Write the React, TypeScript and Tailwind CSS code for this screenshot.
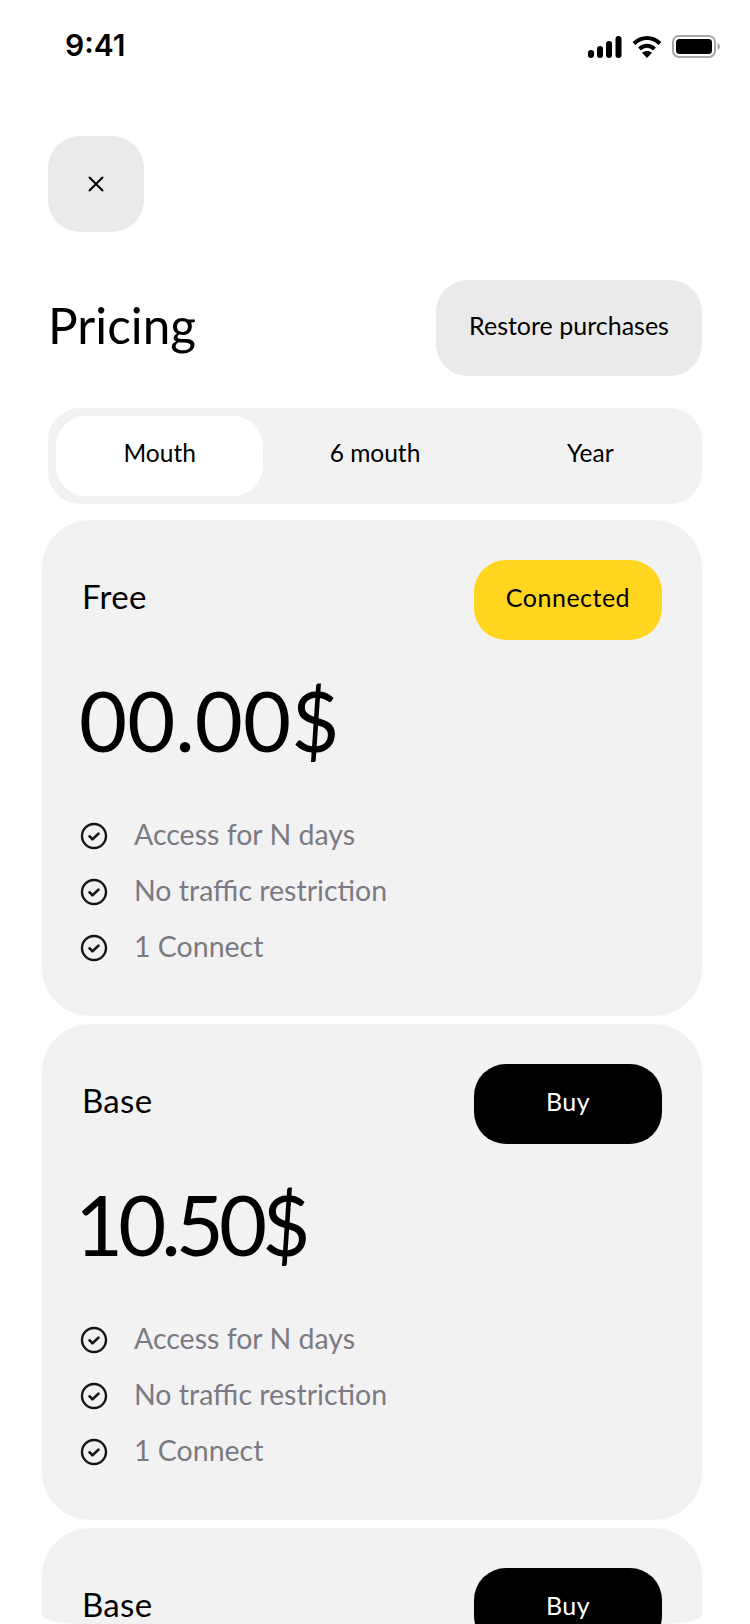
const features = ["Access for N days", "No traffic restriction", "1 Connect"];

function CheckIcon() {
  return (
    <svg width="28" height="28" viewBox="0 0 28 28" fill="none" stroke="#14141a" strokeWidth="2.400" className="shrink-0">
      <circle cx="14" cy="14" r="12" />
      <path d="M9.500 14.300l3 2.900 6-5.600" strokeLinecap="round" strokeLinejoin="round" strokeWidth="2.600" />
    </svg>
  );
}

function StatusBar() {
  return (
    <div className="h-[88px] flex items-start justify-between pl-[65px] pr-[30px] pt-[28px]">
      <span className="font-['Inter',sans-serif] font-semibold text-[30px] leading-[34px] text-black">9:41</span>
      <div className="flex items-center gap-[10px] pt-[7px]">
        <svg width="34" height="22" viewBox="0 0 34 22" fill="#000">
          <rect x="0" y="14" width="6" height="8" rx="3" />
          <rect x="9" y="10" width="6" height="12" rx="3" />
          <rect x="18" y="5" width="6" height="17" rx="3" />
          <rect x="27.500" y="0" width="6" height="22" rx="3" />
        </svg>
        <svg width="30" height="23" viewBox="0 0 30 23" fill="none" stroke="#000" strokeWidth="4">
          <path d="M2 8.500C9.500 1 20.500 1 28 8.500" />
          <path d="M7.500 14c4.500-4.200 10.500-4.200 15 0" />
          <path d="M15 23l-5-5.200c2.800-2.400 7.200-2.400 10 0z" fill="#000" stroke="none" />
        </svg>
        <svg width="48" height="23" viewBox="0 0 48 23" fill="none">
          <rect x="1" y="1" width="42" height="21" rx="6" stroke="#a8a8a8" strokeWidth="2" />
          <rect x="4" y="4" width="36" height="15" rx="3.500" fill="#000" />
          <path d="M45.500 8v7c1.500-.6 2.500-2 2.500-3.500s-1-2.900-2.500-3.500z" fill="#a8a8a8" />
        </svg>
      </div>
    </div>
  );
}

function CardHeader({ name, action, connected }: { name: string; action: string; connected?: boolean }) {
  return (
    <div className="flex items-center justify-between pl-[40px]">
      <span className="text-[33px] tracking-[0.3px] text-black pb-[7px]">{name}</span>
      <button className={`w-[188px] h-[80px] rounded-[32px] text-[25px] tracking-[0.5px] pb-[4px] shrink-0 ${connected ? "bg-[#ffd520] text-black" : "bg-black text-white"}`}>
        {action}
      </button>
    </div>
  );
}

function PlanCard({ name, price, action, connected, priceClass }: { name: string; price: string; action: string; connected?: boolean; priceClass?: string }) {
  return (
    <div className="h-[496px] rounded-[48px] bg-[#f2f2f2] pt-[40px] pr-[40px]">
      <CardHeader name={name} action={action} connected={connected} />
      <div className={`pl-[37px] mt-[32px] text-[83px] leading-[96px] text-black ${priceClass ?? ""}`}>{price}</div>
      <ul className="pl-[38px] mt-[50px] flex flex-col gap-[20px]">
        {features.map((f) => (
          <li key={f} className="flex items-center gap-[26px] h-[36px] text-[28.500px] text-[#7b7a84]">
            <CheckIcon />
            <span className="pb-[4px]">{f}</span>
          </li>
        ))}
      </ul>
    </div>
  );
}

export default function App() {
  return (
    <div className="w-[750px] h-[1624px] overflow-hidden bg-white font-['Lato',sans-serif]">
      <StatusBar />
      <div className="pl-[42px] pr-[48px] pt-[48px]">
        <button className="ml-[6px] w-[96px] h-[96px] rounded-[32px] bg-[#eaeaea] flex items-center justify-center">
          <svg width="20" height="20" viewBox="0 0 20 20" stroke="#000" strokeWidth="2" fill="none">
            <path d="M3 3l14 14M17 3L3 17" />
          </svg>
        </button>
        <div className="mt-[48px] ml-[6px] flex items-center justify-between">
          <h1 className="text-[49.500px] text-black pb-[6px]">Pricing</h1>
          <button className="w-[266px] h-[96px] rounded-[32px] bg-[#eaeaea] text-[25px] pb-[4px] text-black">Restore purchases</button>
        </div>
        <div className="mt-[32px] ml-[6px] h-[96px] rounded-[32px] bg-[#f2f2f2] p-2 grid grid-cols-3 gap-2 text-[24.500px] text-black">
          <div className="rounded-[30px] bg-white flex items-center justify-center pb-[5px]">Mouth</div>
          <div className="flex items-center justify-center pb-[5px]">6 mouth</div>
          <div className="flex items-center justify-center pb-[5px]">Year</div>
        </div>
        <div className="mt-4 flex flex-col gap-2">
          <PlanCard name="Free" price="00.00$" action="Connected" connected />
          <PlanCard name="Base" price="10.50$" action="Buy" priceClass="tracking-[-5px] -ml-[4px]" />
          <div className="h-[96px] overflow-hidden rounded-[48px_48px_40px_40px/48px_48px_9px_9px] bg-[#f2f2f2] pt-[40px] pr-[40px]">
            <CardHeader name="Base" action="Buy" />
          </div>
        </div>
      </div>
    </div>
  );
}
